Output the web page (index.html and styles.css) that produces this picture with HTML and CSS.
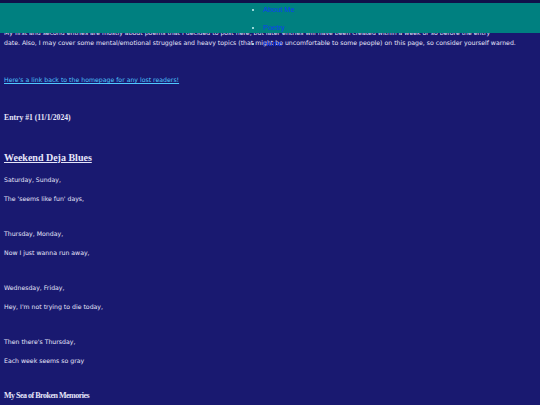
FILE: index.html
```html
<!DOCTYPE html>
<html>
<head>
<meta charset="utf-8">
<link rel="stylesheet" href="styles.css">
</head>
<body>
<nav class="topnav">
  <ul class="navlist">
    <li><a href="#">About Me</a></li>
    <li><a href="#">Poetry</a></li>
    <li><a href="#">Home</a></li>
  </ul>
</nav>
<main class="page">
  <p class="intro">Welcome to my little journal, where I post my thoughts and poems whenever I feel like writing something down.<br>My first and second entries are mostly about poems that I decided to post here, but later entries will have been created within a week or so before the entry<br>date. Also, I may cover some mental/emotional struggles and heavy topics (that might be uncomfortable to some people) on this page, so consider yourself warned.</p>
  <p class="back"><a href="#">Here's a link back to the homepage for any lost readers!</a></p>
  <h3 class="entry">Entry #1 (11/1/2024)</h3>
  <h2 class="title">Weekend Deja Blues</h2>
  <p class="line first">Saturday, Sunday,</p>
  <p class="line">The 'seems like fun' days,</p>
  <p class="line stanza">Thursday, Monday,</p>
  <p class="line">Now I just wanna run away,</p>
  <p class="line stanza">Wednesday, Friday,</p>
  <p class="line">Hey, I'm not trying to die today,</p>
  <p class="line stanza">Then there's Thursday,</p>
  <p class="line">Each week seems so gray</p>
  <h4 class="subtitle">My Sea of Broken Memories</h4>
</main>
</body>
</html>
```
FILE: styles.css
```css
html, body {
  margin: 0;
  padding: 0;
}
body {
  background: #191970;
  color: #e6e6fa;
  font-family: "DejaVu Sans", sans-serif;
  font-size: 6.2px;
}
.topnav {
  position: fixed;
  top: 0;
  left: 0;
  right: 0;
  height: 30px;
  background: #008080;
  border-top: 3px solid #10104a;
}
.navlist {
  margin: 0;
  padding: 3px 0 0 263px;
  color: #c8f4f4;
  font-family: "Liberation Sans", sans-serif;
  font-size: 7.4px;
}
.navlist li {
  line-height: 8px;
  margin-bottom: 10px;
}
.navlist li:nth-child(2) {
  margin-bottom: 8px;
}
.navlist a {
  color: #0c3cff;
  text-decoration: none;
}
.page {
  padding: 18px 4px 0;
}
.intro {
  margin: 0;
  line-height: 10px;
  white-space: nowrap;
}
.back {
  margin: 27px 0 0;
  line-height: 10px;
}
.back a {
  color: #4fc8ff;
}
.entry {
  font-family: "Liberation Serif", serif;
  font-size: 7.7px;
  margin: 28px 0 0;
  line-height: 10px;
}
.title {
  font-family: "Liberation Serif", serif;
  font-size: 10px;
  text-decoration: underline;
  margin: 28px 0 0;
  line-height: 14px;
}
.line {
  margin: 8px 0 0;
  line-height: 11px;
}
.line.first {
  margin-top: 9px;
}
.line.stanza {
  margin-top: 24px;
}
.subtitle {
  font-family: "Liberation Serif", serif;
  font-size: 8px;
  letter-spacing: -0.5px;
  margin: 25px 0 0;
  line-height: 10px;
}
```
